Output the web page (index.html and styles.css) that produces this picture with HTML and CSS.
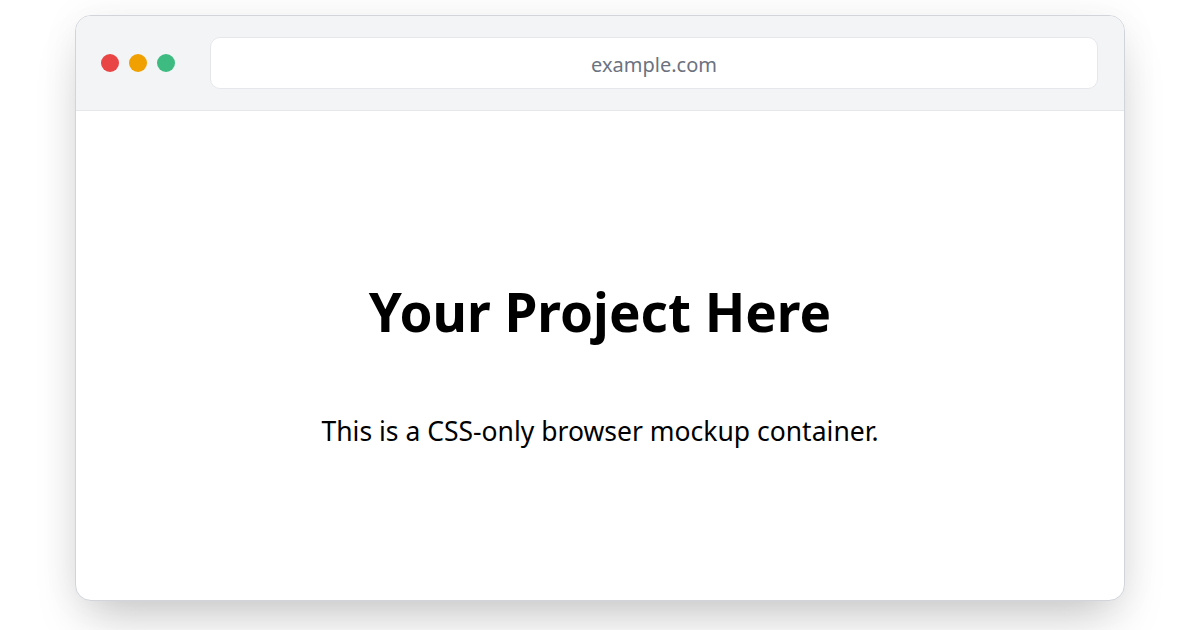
FILE: index.html
```html
<!DOCTYPE html>
<html lang="en">
<head>
<meta charset="utf-8">
<title>Browser Mockup</title>
<link rel="stylesheet" href="styles.css">
</head>
<body>
  <div class="window">
    <div class="toolbar">
      <div class="dots">
        <span class="dot dot-red"></span>
        <span class="dot dot-yellow"></span>
        <span class="dot dot-green"></span>
      </div>
      <div class="address">example.com</div>
    </div>
    <div class="content">
      <h1 class="title">Your Project Here</h1>
      <p class="lead">This is a CSS-only browser mockup container.</p>
    </div>
  </div>
</body>
</html>
```

FILE: styles.css
```css
* { box-sizing: border-box; }
html, body { margin: 0; height: 100%; }
body {
  background: #ffffff;
  padding: 15px 75px 29px;
  font-family: "Noto Sans", "Open Sans", sans-serif;
}
.window {
  height: 586px;
  display: flex;
  flex-direction: column;
  background: #ffffff;
  border: 1px solid #d1d5db;
  border-radius: 16px;
  overflow: hidden;
  box-shadow: 0 25px 50px -12px rgba(0, 0, 0, 0.22), 0 0 40px rgba(0, 0, 0, 0.05);
}
.toolbar {
  display: flex;
  align-items: center;
  gap: 35px;
  height: 95px;
  padding: 0 26px 0 25px;
  background: #f3f4f6;
  border-bottom: 1px solid #e5e7eb;
}
.dots { display: flex; gap: 10px; }
.dot { width: 18px; height: 18px; border-radius: 50%; display: block; }
.dot-red { background: #e94545; }
.dot-yellow { background: #f0a000; }
.dot-green { background: #3dbb80; }
.address {
  flex: 1;
  height: 52px;
  display: flex;
  align-items: center;
  justify-content: center;
  padding-top: 2px;
  background: #ffffff;
  border: 1px solid #e5e7eb;
  border-radius: 10px;
  color: #6b7280;
  font-size: 20px;
}
.content {
  flex: 1;
  display: flex;
  flex-direction: column;
  align-items: center;
  justify-content: center;
  text-align: center;
  color: #000000;
  padding-top: 21px;
}
.title {
  margin: 0;
  font-size: 53px;
  font-weight: 700;
  line-height: 1.2;
}
.lead {
  margin: 68px 0 0;
  font-size: 26.5px;
  line-height: 1.5;
}
```
